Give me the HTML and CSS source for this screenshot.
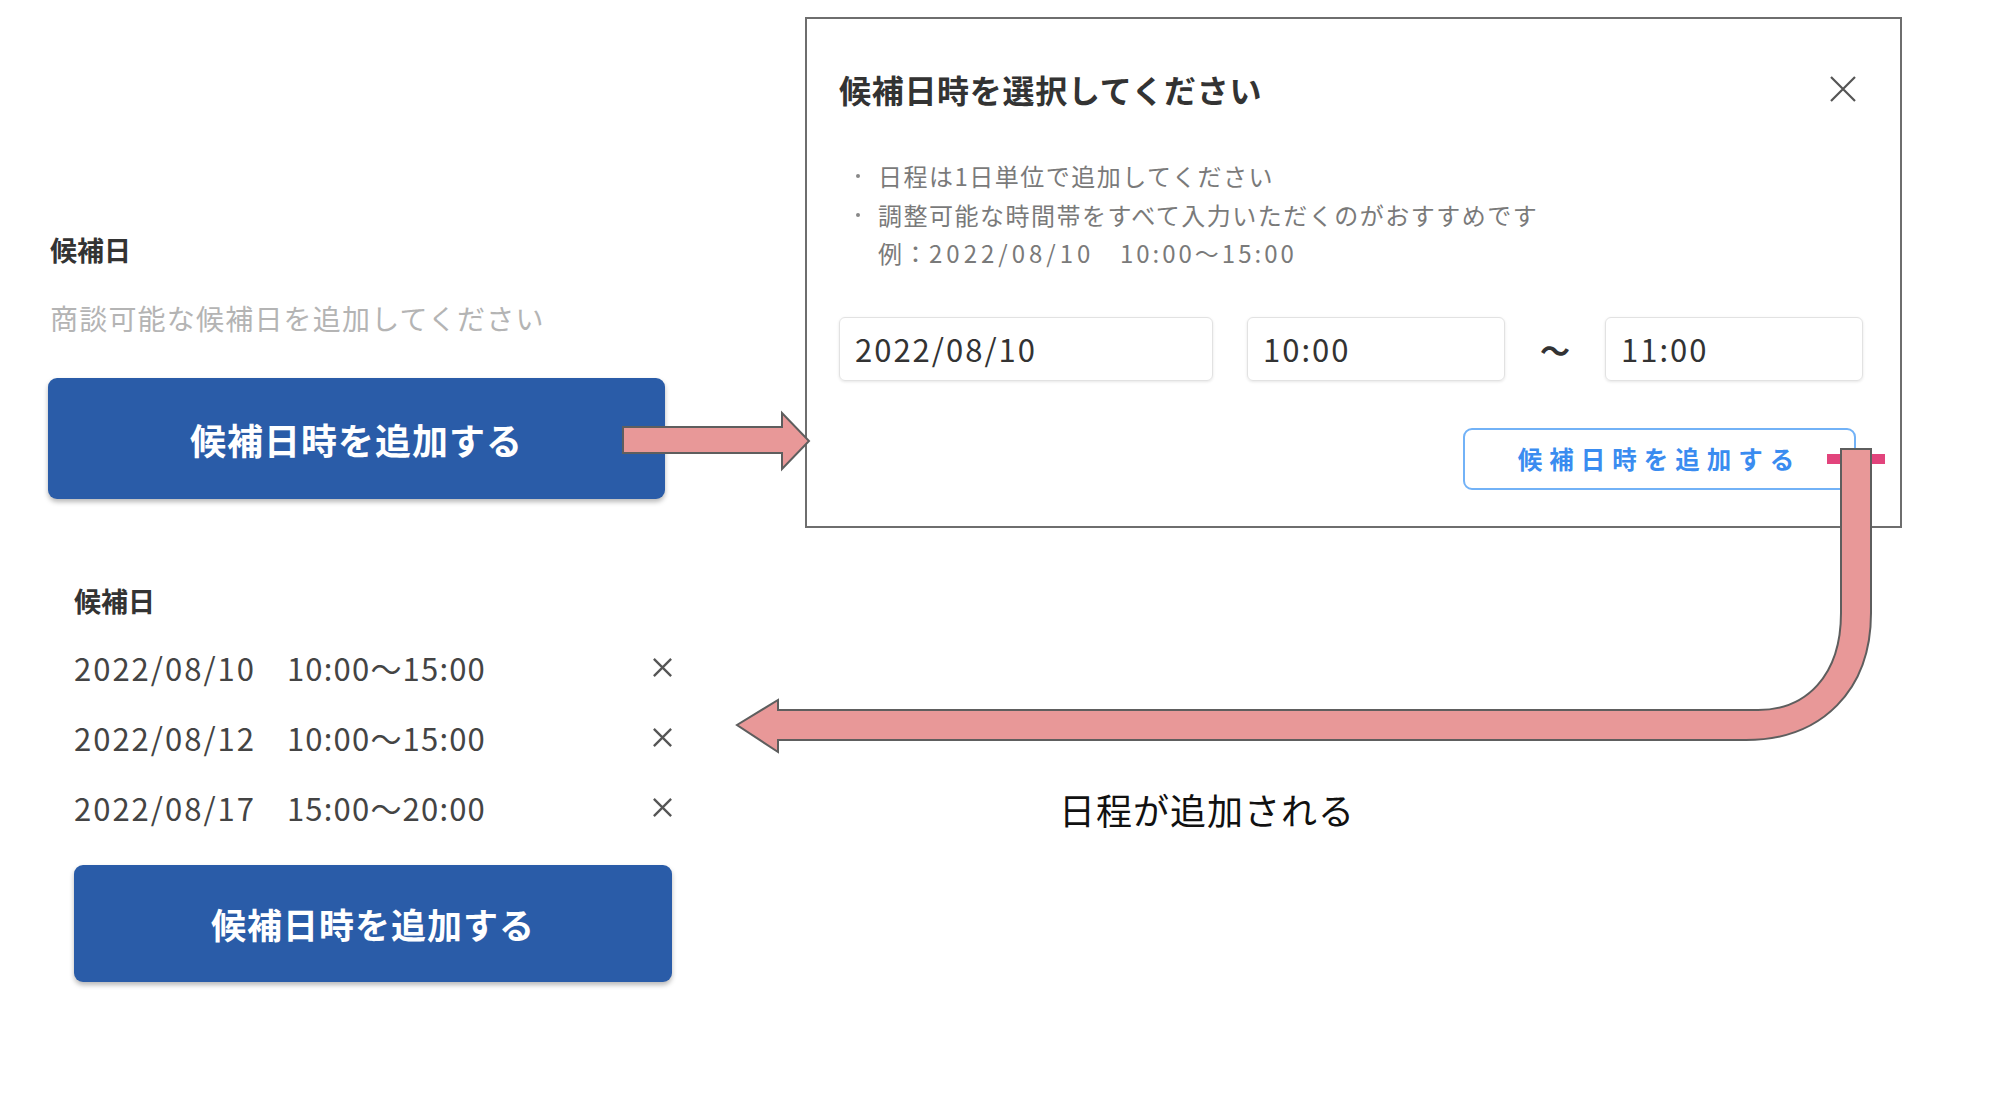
FILE: index.html
```html
<!DOCTYPE html>
<html lang="ja">
<head>
<meta charset="utf-8">
<title>候補日時</title>
<link rel="stylesheet" href="styles.css">
</head>
<body>
<div class="canvas">
  <div class="left">
    <section class="sec1">
      <h3 class="label">候補日</h3>
      <p class="hint">商談可能な候補日を追加してください</p>
      <button class="btn-primary btn-a">候補日時を追加する</button>
    </section>
    <section class="sec2">
      <h3 class="label">候補日</h3>
      <ul class="rows">
        <li class="row"><span><span class="d">2022/08/10</span>　<span class="t">10:00〜15:00</span></span><svg class="rx" viewBox="0 0 24 24"><path d="M3 3 L21 21 M21 3 L3 21"/></svg></li>
        <li class="row"><span><span class="d">2022/08/12</span>　<span class="t">10:00〜15:00</span></span><svg class="rx" viewBox="0 0 24 24"><path d="M3 3 L21 21 M21 3 L3 21"/></svg></li>
        <li class="row"><span><span class="d">2022/08/17</span>　<span class="t">15:00〜20:00</span></span><svg class="rx" viewBox="0 0 24 24"><path d="M3 3 L21 21 M21 3 L3 21"/></svg></li>
      </ul>
      <button class="btn-primary btn-b">候補日時を追加する</button>
    </section>
  </div>

  <div class="modal">
    <div class="modal-head">
      <h2 class="modal-title">候補日時を選択してください</h2>
      <svg class="close" viewBox="0 0 28 28"><path d="M2 2 L26 26 M26 2 L2 26"/></svg>
    </div>
    <ul class="notes">
      <li><span class="dot"></span>日程は1日単位で追加してください</li>
      <li><span class="dot"></span>調整可能な時間帯をすべて入力いただくのがおすすめです</li>
      <li><span class="nodot"></span>例：<span class="nd">2022/08/10</span>　<span class="nt">10:00〜15:00</span></li>
    </ul>
    <div class="inputs">
      <div class="field f-date">2022/08/10</div>
      <div class="field f-time">10:00</div>
      <span class="tilde">〜</span>
      <div class="field f-time">11:00</div>
    </div>
    <div class="modal-foot">
      <button class="btn-outline">候補日時を追加する</button>
    </div>
  </div>

  <p class="caption">日程が追加される</p>

  <svg class="overlay" width="2000" height="1114" viewBox="0 0 2000 1114">
    <rect x="1827" y="454" width="58" height="10" fill="#e2447c"/>
    <path class="arrow" d="M623 427 L782 427 L782 413 L809 441 L782 469 L782 453 L623 453 Z"/>
    <path class="arrow" d="M1841 449 L1871 449 L1871 613 C1871 690 1822 740 1746 740 L778 740 L778 752 L737 725 L778 700 L778 710 L1758 710 C1806 710 1841 676 1841 613 Z"/>
  </svg>
</div>
</body>
</html>
```

FILE: styles.css
```css
* { box-sizing: border-box; }
body {
  margin: 0;
  background: #ffffff;
  font-family: "Noto Sans CJK JP", "Noto Sans", sans-serif;
}
.canvas {
  position: relative;
  width: 2000px;
  height: 1114px;
  overflow: hidden;
  background: #ffffff;
}
.left {
  padding-top: 234px;
  padding-left: 48px;
  width: 700px;
}
.label {
  margin: 0;
  font-size: 27px;
  line-height: 32px;
  font-weight: 700;
  color: #333333;
  padding-left: 2px;
}
.hint {
  margin: 35px 0 0 0;
  padding-left: 2px;
  font-size: 28px;
  line-height: 34px;
  letter-spacing: 1.2px;
  color: #b4b4b4;
}
.btn-primary {
  display: flex;
  align-items: center;
  justify-content: center;
  border: none;
  border-radius: 9px;
  background: #2a5ca8;
  color: #ffffff;
  font-family: "Noto Sans CJK JP", sans-serif;
  font-weight: 700;
  font-size: 36px;
  letter-spacing: 1px;
  box-shadow: 0 3px 5px rgba(0, 0, 0, 0.28);
  padding: 0;
}
.btn-a {
  margin-top: 43px;
  width: 617px;
  height: 121px;
}
.sec2 {
  margin-top: 86px;
  margin-left: 26px;
}
.sec2 .label { padding-left: 0; }
.rows {
  list-style: none;
  margin: 15px 0 0 0;
  padding: 0;
  width: 600px;
}
.row {
  height: 70px;
  display: flex;
  align-items: center;
  justify-content: space-between;
  font-size: 31px;
  color: #444444;
}
.row .d { letter-spacing: 2px; }
.row .t { letter-spacing: 1.2px; }
.rx {
  width: 23px;
  height: 23px;
  fill: none;
  stroke: #555555;
  stroke-width: 2.4;
}
.btn-b {
  margin-top: 23px;
  width: 598px;
  height: 117px;
  font-size: 35px;
}

.modal {
  position: absolute;
  left: 805px;
  top: 17px;
  width: 1097px;
  height: 511px;
  border: 2px solid #6e6e6e;
  background: #ffffff;
  padding: 51px 37px 0 32px;
}
.modal-head {
  display: flex;
  align-items: center;
  justify-content: space-between;
}
.modal-title {
  margin: 0;
  font-size: 32px;
  line-height: 38px;
  font-weight: 700;
  letter-spacing: 0.7px;
  color: #333333;
}
.close {
  width: 28px;
  height: 28px;
  margin-right: 6px;
  fill: none;
  stroke: #555555;
  stroke-width: 2.2;
}
.notes {
  list-style: none;
  margin: 49px 0 0 0;
  padding: 0;
  font-size: 24px;
  line-height: 38.5px;
  letter-spacing: 1.5px;
  color: #7a7a7a;
}
.notes li {
  display: flex;
  align-items: center;
}
.notes .nd { letter-spacing: 4px; }
.notes .nt { letter-spacing: 3px; }
.dot, .nodot {
  width: 39px;
  display: flex;
  justify-content: flex-end;
  padding-right: 18px;
}
.dot::before {
  content: "";
  width: 4px;
  height: 4px;
  border-radius: 50%;
  background: #888888;
}
.inputs {
  display: flex;
  align-items: center;
  margin-top: 44px;
}
.field {
  flex: none;
  height: 64px;
  border: 1px solid #e2e2e2;
  border-radius: 6px;
  box-shadow: 0 1px 3px rgba(0, 0, 0, 0.10);
  display: flex;
  align-items: center;
  padding-left: 15px;
  font-size: 31px;
  letter-spacing: 2px;
  color: #333333;
}
.f-date { width: 374px; margin-right: 34px; }
.f-time { width: 258px; }
.tilde {
  flex: none;
  width: 100px;
  text-align: center;
  font-size: 30px;
  font-weight: 700;
  color: #333333;
}
.modal-foot {
  display: flex;
  justify-content: flex-end;
  margin-top: 47px;
  padding-right: 7px;
}
.btn-outline {
  width: 393px;
  height: 62px;
  border: 2px solid #72b2f7;
  border-radius: 9px;
  background: #ffffff;
  color: #3a8cf0;
  font-family: "Noto Sans CJK JP", sans-serif;
  font-weight: 700;
  font-size: 24.5px;
  letter-spacing: 7px;
  padding: 0;
}
.caption {
  position: absolute;
  left: 1059px;
  top: 784px;
  margin: 0;
  font-size: 36px;
  line-height: 50px;
  letter-spacing: 1px;
  color: #111111;
}
.overlay {
  position: absolute;
  left: 0;
  top: 0;
  pointer-events: none;
}
.arrow {
  fill: #e89898;
  stroke: #5e5e5e;
  stroke-width: 2;
}
```
